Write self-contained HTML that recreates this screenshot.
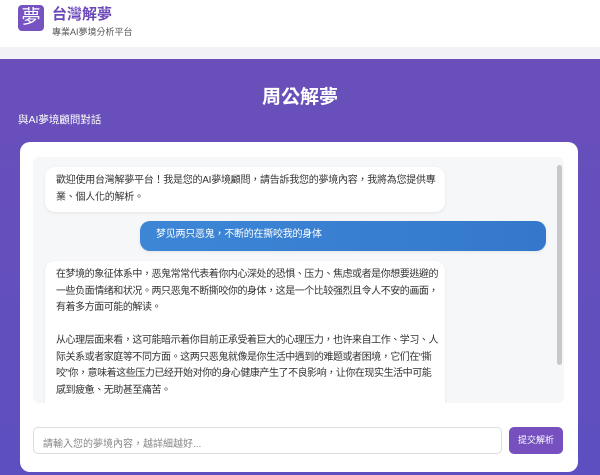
<!DOCTYPE html><html><head><meta charset="utf-8"><style>
*{margin:0;padding:0;box-sizing:border-box}
body{width:600px;height:475px;overflow:hidden;font-family:"Liberation Sans","Noto Sans CJK TC",sans-serif;background:linear-gradient(180deg,#6c4fb9 0%,#5d4fc0 100%);position:relative}
.hdr{position:absolute;left:0;top:0;width:600px;height:47px;background:#fff}
.strip{position:absolute;left:0;top:47px;width:600px;height:12px;background:#f2f2f6}
.logo{position:absolute;left:18px;top:5px;width:26px;height:26px;background:#7653c0;border-radius:4px;color:#fff;font-size:19px;line-height:26px;text-align:center}
.t1{position:absolute;left:52px;top:3px;font-size:15px;font-weight:bold;color:#6a48b8}
.t2{position:absolute;left:52px;top:25px;font-size:9px;color:#555}
h1{position:absolute;left:0;width:600px;top:82px;text-align:center;color:#fff;font-size:19px;font-weight:bold}
.sub{position:absolute;left:18px;top:112px;color:#fff;font-size:10.5px}
.card{position:absolute;left:20px;top:142px;width:558px;height:330px;background:#fff;border-radius:10px}
.chat{position:absolute;left:13px;top:15px;width:531px;height:246px;background:#f6f7f9;border-radius:6px;overflow:hidden}
.sb{position:absolute;right:2px;top:8px;width:5px;height:200px;background:#c8c8cc;border-radius:3px}
.b{position:absolute;font-size:10px;letter-spacing:-0.25px;line-height:16.5px;color:#333;background:#fff;border-radius:10px;padding:6px 8px 6px 11px;box-shadow:0 1px 3px rgba(0,0,0,.08)}
.nw{white-space:nowrap;overflow:hidden;letter-spacing:-0.45px}
.u{background:linear-gradient(90deg,#3d86d6,#3478cc);color:#fff;border-radius:10px}
.in{position:absolute;left:13px;top:285px;width:469px;height:27px;border:1px solid #ddd;border-radius:5px;font-size:10px;color:#888;padding:7px 9px}
.btn{position:absolute;left:489px;top:285px;width:54px;height:27px;background:#7650bf;border-radius:5px;color:#fff;font-size:9px;text-align:center;line-height:27px}
</style></head><body>
<div class="hdr"></div><div class="strip"></div>
<div class="logo">夢</div><div class="t1">台灣解夢</div><div class="t2">專業AI夢境分析平台</div>
<h1>周公解夢</h1><div class="sub">與AI夢境顧問對話</div>
<div class="card">
<div class="chat">
<div class="b" style="left:12px;top:10px;width:400px">歡迎使用台灣解夢平台！我是您的AI夢境顧問，請告訴我您的夢境內容，我將為您提供專業、個人化的解析。</div>
<div class="b u" style="left:107px;top:64px;width:406px;height:30px;padding:6px 16px">梦见两只恶鬼，不断的在撕咬我的身体</div>
<div class="b nw" style="left:12px;top:104px;width:400px;height:200px">在梦境的象征体系中，恶鬼常常代表着你内心深处的恐惧、压力、焦虑或者是你想要逃避的<br>一些负面情绪和状况。两只恶鬼不断撕咬你的身体，这是一个比较强烈且令人不安的画面，<br>有着多方面可能的解读。<br><br>从心理层面来看，这可能暗示着你目前正承受着巨大的心理压力，也许来自工作、学习、人<br>际关系或者家庭等不同方面。这两只恶鬼就像是你生活中遇到的难题或者困境，它们在“撕<br>咬”你，意味着这些压力已经开始对你的身心健康产生了不良影响，让你在现实生活中可能<br>感到疲惫、无助甚至痛苦。<br><br>另外，恶鬼也可能象征着你过去经历过的一些创伤事件或者不愉快的回忆，这些记忆一直潜</div>
<div class="sb"></div>
</div>
<div class="in">請輸入您的夢境內容，越詳細越好...</div>
<div class="btn">提交解析</div>
</div>
</body></html>
